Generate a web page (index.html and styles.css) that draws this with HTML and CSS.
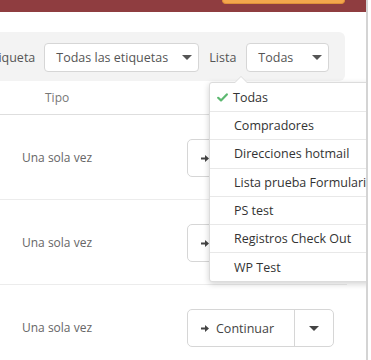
FILE: index.html
```html
<!DOCTYPE html>
<html lang="es">
<head>
    <meta charset="UTF-8">
    <meta name="viewport" content="width=device-width, initial-scale=1.0">
    <title>Automatizaciones</title>
    <link rel="stylesheet" href="styles.css">
</head>
<body>
    <div class="page">
        <div class="topbar">
            <span class="topbar-btn"></span>
        </div>

        <div class="filters">
            <label class="filter-label first">Etiqueta</label>
            <div class="select wide">
                <span>Todas las etiquetas</span>
                <span class="caret"></span>
            </div>
            <label class="filter-label">Lista</label>
            <div class="select narrow">
                <span>Todas</span>
                <span class="caret"></span>
            </div>
        </div>

        <div class="table">
            <div class="table-head">
                <span class="col-type">Tipo</span>
            </div>
            <div class="row">
                <span class="col-type">Una sola vez</span>
                <div class="split-btn">
                    <span class="main">
                        <svg class="arrow" width="8" height="7" viewBox="0 0 8 7"><path d="M0 2.5h4.5v2H0z M4 0 L8 3.5 L4 7z" fill="#444"/></svg>
                        Continuar
                    </span>
                    <span class="toggle"><span class="caret"></span></span>
                </div>
            </div>
            <div class="row">
                <span class="col-type">Una sola vez</span>
                <div class="split-btn">
                    <span class="main">
                        <svg class="arrow" width="8" height="7" viewBox="0 0 8 7"><path d="M0 2.5h4.5v2H0z M4 0 L8 3.5 L4 7z" fill="#444"/></svg>
                        Continuar
                    </span>
                    <span class="toggle"><span class="caret"></span></span>
                </div>
            </div>
            <div class="row">
                <span class="col-type">Una sola vez</span>
                <div class="split-btn">
                    <span class="main">
                        <svg class="arrow" width="8" height="7" viewBox="0 0 8 7"><path d="M0 2.5h4.5v2H0z M4 0 L8 3.5 L4 7z" fill="#444"/></svg>
                        Continuar
                    </span>
                    <span class="toggle"><span class="caret"></span></span>
                </div>
            </div>
        </div>

        <!-- open dropdown of the "Lista" select -->
        <ul class="menu">
            <li class="active">
                <svg class="check" width="11" height="9" viewBox="0 0 11 9">
                    <path d="M1.2 4.8 L4 7.4 L9.8 1.4" fill="none" stroke="#5cb870" stroke-width="2.2" stroke-linecap="round" stroke-linejoin="round"/>
                </svg>
                Todas
            </li>
            <li>Compradores</li>
            <li>Direcciones hotmail</li>
            <li>Lista prueba Formulario</li>
            <li>PS test</li>
            <li>Registros Check Out</li>
            <li>WP Test</li>
        </ul>
    </div>
</body>
</html>
```

FILE: styles.css
```css
body {
    margin: 0;
    background-color: #fff;
    font-family: "Open Sans", Arial, sans-serif;
    color: #555;
}
.page {
    position: relative;
    width: 366px;
    height: 360px;
    overflow: hidden;
    border-right: 2px solid #d4d4d4;
}

/* top header, only its lower edge is in view */
.topbar {
    height: 12px;
    background-color: #8f3d40;
    display: flex;
    justify-content: flex-end;
    padding-right: 21px;
}
.topbar-btn {
    width: 121px;
    height: 3px;
    background-color: #f4a64c;
    border: 1px solid #e0903a;
    border-top: none;
    border-radius: 0 0 4px 4px;
}

/* filter bar */
.filters {
    margin-top: 20px;
    width: 345px;
    height: 49px;
    background-color: #f3f3f3;
    border-radius: 0 6px 6px 0;
    display: flex;
    align-items: center;
    gap: 10px;
    font-size: 12.5px;
}
.filter-label {
    color: #555;
    margin-top: 2px;
}
.filter-label.first {
    margin-left: -13px;
    margin-right: -1px;
}
.select {
    height: 27px;
    margin-top: 2px;
    background-color: #fff;
    border: 1px solid #d6d6d6;
    border-radius: 4px;
    display: flex;
    align-items: center;
    justify-content: space-between;
    padding: 0 6px 0 11px;
    color: #555;
}
.select.wide {
    width: 136px;
}
.select.narrow {
    width: 64px;
}
.caret {
    width: 0;
    height: 0;
    border-left: 5px solid transparent;
    border-right: 5px solid transparent;
    border-top: 5px solid #555;
}

/* table */
.table {
    width: 347px;
}
.table-head {
    height: 33px;
    display: flex;
    align-items: center;
    border-bottom: 1px solid #dedede;
    font-size: 12px;
    color: #777;
}
.table-head .col-type {
    margin-left: 45px;
}
.row {
    height: 84px;
    display: flex;
    align-items: center;
    border-bottom: 1px solid #ececec;
    font-size: 12px;
    color: #666;
}
.row .col-type {
    margin-left: 22px;
    width: 165px;
}
.split-btn {
    display: flex;
    height: 36px;
    margin-top: 2px;
    border: 1px solid #d6d6d6;
    border-radius: 5px;
    color: #444;
    font-size: 12.5px;
}
.split-btn .main {
    width: 93px;
    display: flex;
    align-items: center;
    padding-left: 13px;
    border-right: 1px solid #d6d6d6;
}
.split-btn .arrow {
    margin-right: 7px;
}
.split-btn .toggle {
    width: 38px;
    display: flex;
    align-items: center;
    justify-content: center;
}
.split-btn .toggle .caret {
    border-top-color: #444;
}

/* dropdown menu */
.menu {
    position: absolute;
    left: 209px;
    top: 82px;
    width: 170px;
    margin: 0;
    padding: 0;
    list-style: none;
    background-color: #fff;
    border: 1px solid #dcdcdc;
    border-radius: 3px;
    box-shadow: 0 2px 6px rgba(0, 0, 0, 0.18);
    font-size: 12.5px;
    font-weight: 500;
    color: #333;
}
.menu::before {
    content: "";
    position: absolute;
    left: 24px;
    top: -7px;
    border-left: 7px solid transparent;
    border-right: 7px solid transparent;
    border-bottom: 7px solid #dcdcdc;
}
.menu::after {
    content: "";
    position: absolute;
    left: 25px;
    top: -6px;
    border-left: 6px solid transparent;
    border-right: 6px solid transparent;
    border-bottom: 6px solid #fff;
}
.menu li {
    height: 27.3px;
    display: flex;
    align-items: center;
    padding-left: 24px;
    border-top: 1px solid #e8e8e8;
    white-space: nowrap;
}
.menu li:first-child {
    height: 28px;
    border-top: none;
}
.menu li.active {
    padding-left: 7px;
}
.check {
    margin-right: 5px;
}
```
